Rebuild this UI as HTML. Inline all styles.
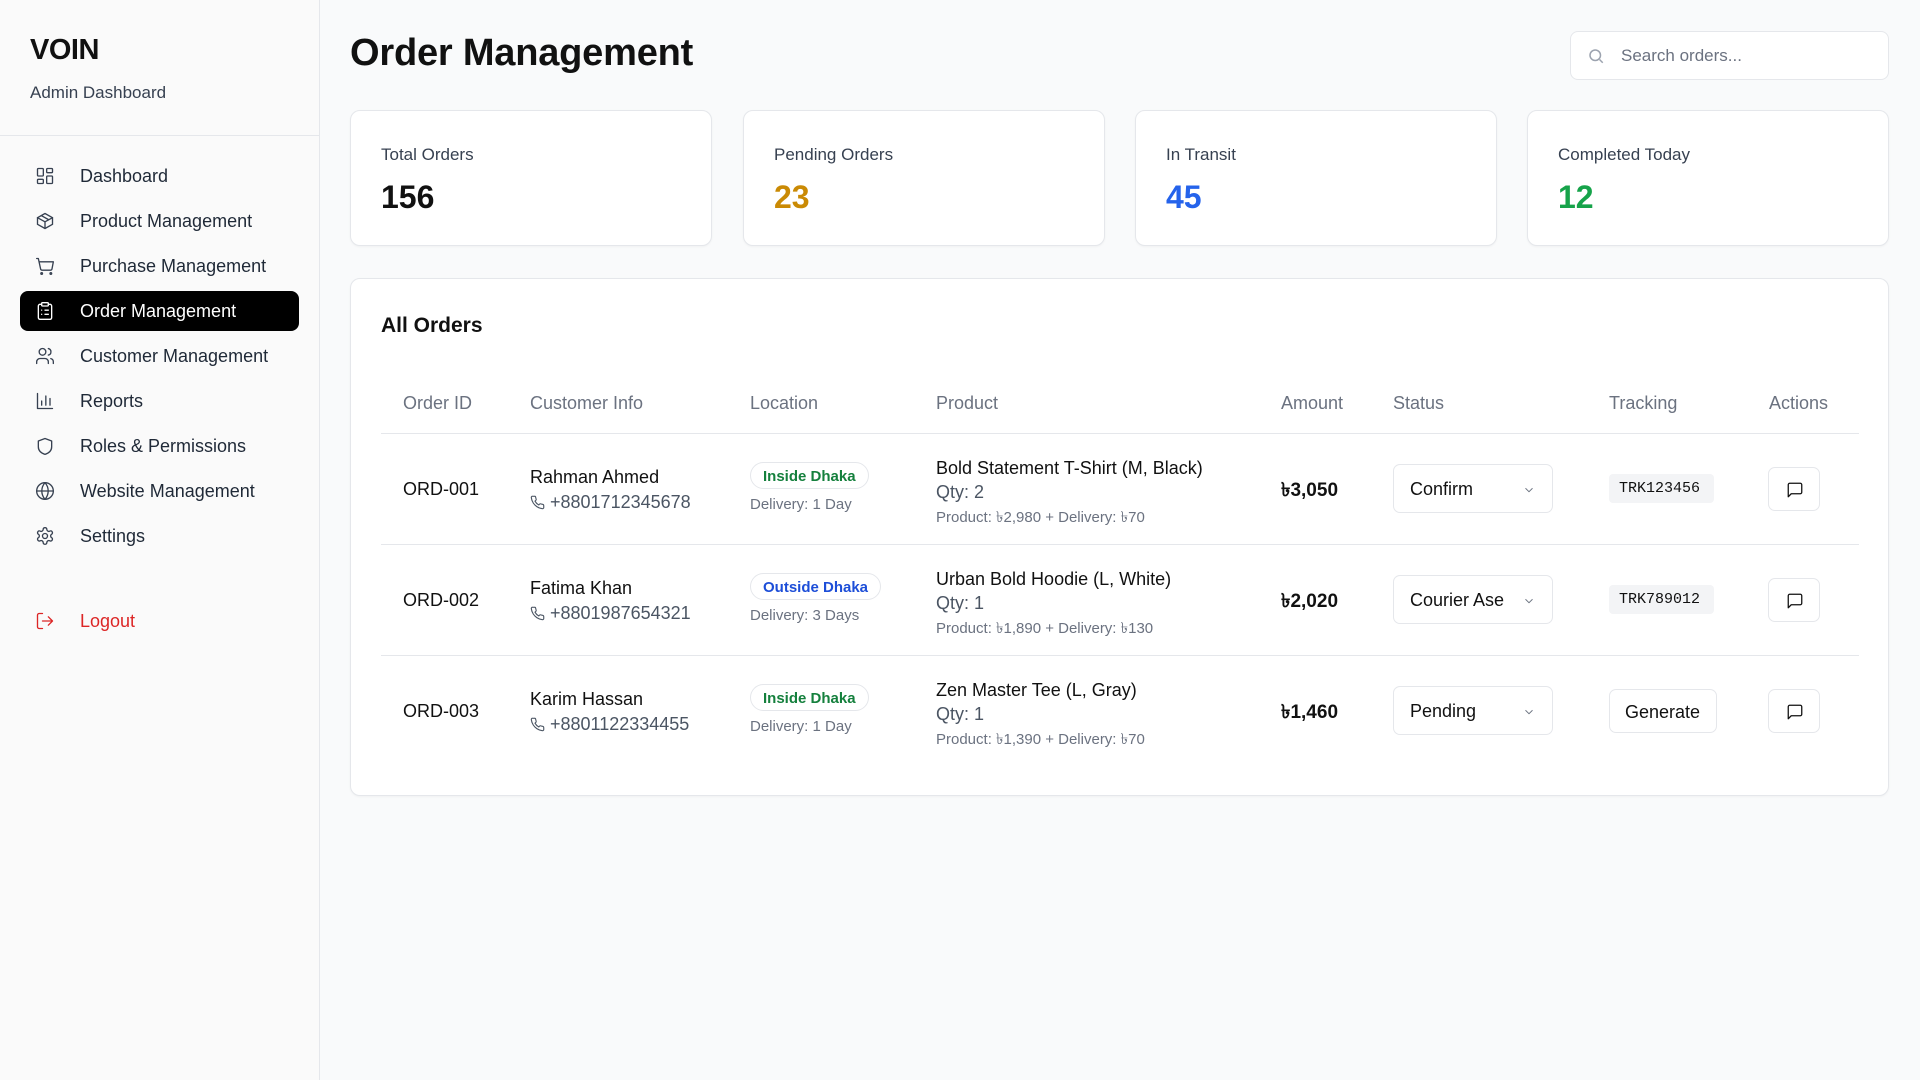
<!DOCTYPE html>
<html><head><meta charset="utf-8"><style>
*{box-sizing:border-box;margin:0;padding:0}
body{width:1920px;height:1080px;background:#f9fafb;font-family:"Liberation Sans",Arial,sans-serif;color:#111;position:relative;overflow:hidden}
.sb{position:absolute;left:0;top:0;width:320px;height:1080px;background:#fafafa;border-right:1px solid #e5e7eb}
.logo{position:absolute;left:30px;top:34px;font-size:29px;font-weight:bold;letter-spacing:-0.5px}
.sub{position:absolute;left:30px;top:83px;font-size:17px;color:#374151}
.div{position:absolute;left:0;top:135px;width:319px;border-top:1px solid #e5e7eb}
.nav{position:absolute;left:20px;width:279px;height:40px;border-radius:8px;display:flex;align-items:center;font-size:18px;color:#1f2937}
.nav svg{position:absolute;left:15px;width:20px;height:20px;fill:none;stroke:#374151;stroke-width:1.6;stroke-linecap:round;stroke-linejoin:round}
.nav span{position:absolute;left:60px}
.nav.act{background:#000;color:#fff}
.nav.act svg{stroke:#fff}
.nav.out{color:#dc2626}.nav.out svg{stroke:#dc2626}
h1{position:absolute;left:350px;top:32px;font-size:38px;font-weight:bold;letter-spacing:-0.2px}
.search{position:absolute;left:1570px;top:31px;width:319px;height:49px;background:#fff;border:1px solid #e5e7eb;border-radius:8px;font-size:17px;color:#6b7280;padding:14px 0 0 50px}
.search svg{position:absolute;left:16px;top:15px;width:18px;height:18px;fill:none;stroke:#9ca3af;stroke-width:2}
.card{position:absolute;background:#fff;border:1px solid #e5e7eb;border-radius:10px;box-shadow:0 1px 2px rgba(0,0,0,.04)}
.st{top:110px;height:136px;width:362px}
.st .l{position:absolute;left:30px;top:34px;font-size:17px;color:#374151}
.st .v{position:absolute;left:30px;top:68px;font-size:32px;font-weight:bold}
.main{left:350px;top:278px;width:1539px;height:518px}
.ttl{position:absolute;left:30px;top:35px;font-size:21px;font-weight:bold}
.th{position:absolute;top:114px;font-size:18px;color:#6b7280}
.hl{position:absolute;left:30px;width:1478px;border-top:1px solid #e5e7eb}
.t{position:absolute;font-size:18px;white-space:nowrap}
.g{color:#4b5563}
.ph{padding-left:20px}
.ph svg{position:absolute;left:0;top:3px;width:15px;height:15px;fill:none;stroke:#4b5563;stroke-width:1.8;stroke-linejoin:round}
.sm{font-size:15px;color:#6b7280}
.badge{position:absolute;height:27px;border:1px solid #e5e7eb;border-radius:14px;font-size:15px;font-weight:bold;padding:5px 12px 0}
.sel{position:absolute;left:1042px;width:160px;height:49px;border:1px solid #e5e7eb;border-radius:7px;font-size:18px;padding:14px 0 0 16px}
.sel svg{position:absolute;right:16px;top:18px;width:14px;height:14px;fill:none;stroke:#6b7280;stroke-width:1.6}
.chip{position:absolute;left:1258px;width:105px;height:29px;background:#f3f4f6;border-radius:4px;font-family:"Liberation Mono",monospace;font-size:15px;padding:6px 0 0 10px}
.btn{position:absolute;border:1px solid #e5e7eb;border-radius:7px;background:#fff}
.btn svg{position:absolute;left:17px;top:13px;width:18px;height:18px;fill:none;stroke:#111;stroke-width:1.7;stroke-linejoin:round}
.amt{font-weight:bold;font-size:19px}
</style></head><body>
<div class="sb">
<div class="logo">VOIN</div>
<div class="sub">Admin Dashboard</div>
<div class="div"></div>
<div class="nav" style="top:156px"><svg viewBox="0 0 24 24"><rect x="3" y="3" width="7" height="9" rx="1"/><rect x="14" y="3" width="7" height="5" rx="1"/><rect x="14" y="12" width="7" height="9" rx="1"/><rect x="3" y="16" width="7" height="5" rx="1"/></svg><span>Dashboard</span></div>
<div class="nav" style="top:201px"><svg viewBox="0 0 24 24"><path d="M21 8l-9-5-9 5v8l9 5 9-5z"/><path d="M3 8l9 5 9-5M12 13v8M7.5 5.5l9 5"/></svg><span>Product Management</span></div>
<div class="nav" style="top:246px"><svg viewBox="0 0 24 24"><circle cx="8" cy="21" r="1"/><circle cx="19" cy="21" r="1"/><path d="M2 3h2l2.7 12.4a2 2 0 0 0 2 1.6h9.7a2 2 0 0 0 2-1.6L22 7H5"/></svg><span>Purchase Management</span></div>
<div class="nav act" style="top:291px"><svg viewBox="0 0 24 24"><rect x="8" y="2" width="8" height="4" rx="1"/><path d="M16 4h2a2 2 0 0 1 2 2v14a2 2 0 0 1-2 2H6a2 2 0 0 1-2-2V6a2 2 0 0 1 2-2h2M12 11h4M12 16h4M8 11h.01M8 16h.01"/></svg><span>Order Management</span></div>
<div class="nav" style="top:336px"><svg viewBox="0 0 24 24"><path d="M16 21v-2a4 4 0 0 0-4-4H6a4 4 0 0 0-4 4v2"/><circle cx="9" cy="7" r="4"/><path d="M22 21v-2a4 4 0 0 0-3-3.9M16 3.1a4 4 0 0 1 0 7.8"/></svg><span>Customer Management</span></div>
<div class="nav" style="top:381px"><svg viewBox="0 0 24 24"><path d="M3 3v18h18M8 17v-5M13 17V6M18 17v-8"/></svg><span>Reports</span></div>
<div class="nav" style="top:426px"><svg viewBox="0 0 24 24"><path d="M20 13c0 5-3.5 7.5-8 9-4.5-1.5-8-4-8-9V6l8-3 8 3z"/></svg><span>Roles &amp; Permissions</span></div>
<div class="nav" style="top:471px"><svg viewBox="0 0 24 24"><circle cx="12" cy="12" r="10"/><path d="M2 12h20M12 2a15 15 0 0 1 0 20 15 15 0 0 1 0-20"/></svg><span>Website Management</span></div>
<div class="nav" style="top:516px"><svg viewBox="0 0 24 24"><circle cx="12" cy="12" r="3"/><path d="M12.2 2h-.4a2 2 0 0 0-2 2v.2a2 2 0 0 1-1 1.7l-.4.3a2 2 0 0 1-2 0l-.2-.1a2 2 0 0 0-2.7.7l-.2.4a2 2 0 0 0 .7 2.7l.2.1a2 2 0 0 1 1 1.7v.5a2 2 0 0 1-1 1.7l-.2.1a2 2 0 0 0-.7 2.7l.2.4a2 2 0 0 0 2.7.7l.2-.1a2 2 0 0 1 2 0l.4.3a2 2 0 0 1 1 1.7v.2a2 2 0 0 0 2 2h.4a2 2 0 0 0 2-2v-.2a2 2 0 0 1 1-1.7l.4-.3a2 2 0 0 1 2 0l.2.1a2 2 0 0 0 2.7-.7l.2-.4a2 2 0 0 0-.7-2.7l-.2-.1a2 2 0 0 1-1-1.7v-.5a2 2 0 0 1 1-1.7l.2-.1a2 2 0 0 0 .7-2.7l-.2-.4a2 2 0 0 0-2.7-.7l-.2.1a2 2 0 0 1-2 0l-.4-.3a2 2 0 0 1-1-1.7V4a2 2 0 0 0-2-2z"/></svg><span>Settings</span></div>
<div class="nav out" style="top:601px"><svg viewBox="0 0 24 24"><path d="M9 21H5a2 2 0 0 1-2-2V5a2 2 0 0 1 2-2h4M16 17l5-5-5-5M21 12H9"/></svg><span>Logout</span></div>
</div>

<h1>Order Management</h1>
<div class="search"><svg viewBox="0 0 24 24"><circle cx="11" cy="11" r="7"/><path d="M21 21l-4.3-4.3"/></svg>Search orders...</div>

<div class="card st" style="left:350px"><div class="l">Total Orders</div><div class="v">156</div></div>
<div class="card st" style="left:743px"><div class="l">Pending Orders</div><div class="v" style="color:#ca8a04">23</div></div>
<div class="card st" style="left:1135px"><div class="l">In Transit</div><div class="v" style="color:#2563eb">45</div></div>
<div class="card st" style="left:1527px"><div class="l">Completed Today</div><div class="v" style="color:#16a34a">12</div></div>

<div class="card main">
<div class="ttl">All Orders</div>
<div class="th" style="left:52px">Order ID</div>
<div class="th" style="left:179px">Customer Info</div>
<div class="th" style="left:399px">Location</div>
<div class="th" style="left:585px">Product</div>
<div class="th" style="left:930px">Amount</div>
<div class="th" style="left:1042px">Status</div>
<div class="th" style="left:1258px">Tracking</div>
<div class="th" style="left:1418px">Actions</div>
<div class="hl" style="top:154px"></div>
<div class="hl" style="top:265px"></div>
<div class="hl" style="top:376px"></div>

<!-- row 1 -->
<div class="t" style="left:52px;top:200px">ORD-001</div>
<div class="t" style="left:179px;top:188px">Rahman Ahmed</div>
<div class="t g ph" style="left:179px;top:213px"><svg viewBox="0 0 24 24"><path d="M22 16.9v3a2 2 0 0 1-2.2 2 19.8 19.8 0 0 1-8.6-3.1 19.5 19.5 0 0 1-6-6A19.8 19.8 0 0 1 2.1 4.2 2 2 0 0 1 4.1 2h3a2 2 0 0 1 2 1.7c.1 1 .4 1.9.7 2.8a2 2 0 0 1-.5 2.1L8 9.9a16 16 0 0 0 6 6l1.3-1.3a2 2 0 0 1 2.1-.4c.9.3 1.8.6 2.8.7a2 2 0 0 1 1.7 2z"/></svg>+8801712345678</div>
<div class="badge" style="left:399px;top:183px;color:#15803d">Inside Dhaka</div>
<div class="t sm" style="left:399px;top:217px">Delivery: 1 Day</div>
<div class="t" style="left:585px;top:179px">Bold Statement T-Shirt (M, Black)</div>
<div class="t g" style="left:585px;top:203px">Qty: 2</div>
<div class="t sm" style="left:585px;top:227px">Product: ৳2,980 + Delivery: ৳70</div>
<div class="t amt" style="left:930px;top:197px">৳3,050</div>
<div class="sel" style="top:185px">Confirm<svg viewBox="0 0 24 24"><path d="M6 9l6 6 6-6"/></svg></div>
<div class="chip" style="top:195px">TRK123456</div>
<div class="btn" style="left:1417px;top:188px;width:52px;height:44px"><svg viewBox="0 0 24 24"><path d="M21 15a2 2 0 0 1-2 2H7l-4 4V5a2 2 0 0 1 2-2h14a2 2 0 0 1 2 2z"/></svg></div>

<!-- row 2 -->
<div class="t" style="left:52px;top:311px">ORD-002</div>
<div class="t" style="left:179px;top:299px">Fatima Khan</div>
<div class="t g ph" style="left:179px;top:324px"><svg viewBox="0 0 24 24"><path d="M22 16.9v3a2 2 0 0 1-2.2 2 19.8 19.8 0 0 1-8.6-3.1 19.5 19.5 0 0 1-6-6A19.8 19.8 0 0 1 2.1 4.2 2 2 0 0 1 4.1 2h3a2 2 0 0 1 2 1.7c.1 1 .4 1.9.7 2.8a2 2 0 0 1-.5 2.1L8 9.9a16 16 0 0 0 6 6l1.3-1.3a2 2 0 0 1 2.1-.4c.9.3 1.8.6 2.8.7a2 2 0 0 1 1.7 2z"/></svg>+8801987654321</div>
<div class="badge" style="left:399px;top:294px;color:#1d4ed8">Outside Dhaka</div>
<div class="t sm" style="left:399px;top:328px">Delivery: 3 Days</div>
<div class="t" style="left:585px;top:290px">Urban Bold Hoodie (L, White)</div>
<div class="t g" style="left:585px;top:314px">Qty: 1</div>
<div class="t sm" style="left:585px;top:338px">Product: ৳1,890 + Delivery: ৳130</div>
<div class="t amt" style="left:930px;top:308px">৳2,020</div>
<div class="sel" style="top:296px">Courier Ase<svg viewBox="0 0 24 24"><path d="M6 9l6 6 6-6"/></svg></div>
<div class="chip" style="top:306px">TRK789012</div>
<div class="btn" style="left:1417px;top:299px;width:52px;height:44px"><svg viewBox="0 0 24 24"><path d="M21 15a2 2 0 0 1-2 2H7l-4 4V5a2 2 0 0 1 2-2h14a2 2 0 0 1 2 2z"/></svg></div>

<!-- row 3 -->
<div class="t" style="left:52px;top:422px">ORD-003</div>
<div class="t" style="left:179px;top:410px">Karim Hassan</div>
<div class="t g ph" style="left:179px;top:435px"><svg viewBox="0 0 24 24"><path d="M22 16.9v3a2 2 0 0 1-2.2 2 19.8 19.8 0 0 1-8.6-3.1 19.5 19.5 0 0 1-6-6A19.8 19.8 0 0 1 2.1 4.2 2 2 0 0 1 4.1 2h3a2 2 0 0 1 2 1.7c.1 1 .4 1.9.7 2.8a2 2 0 0 1-.5 2.1L8 9.9a16 16 0 0 0 6 6l1.3-1.3a2 2 0 0 1 2.1-.4c.9.3 1.8.6 2.8.7a2 2 0 0 1 1.7 2z"/></svg>+8801122334455</div>
<div class="badge" style="left:399px;top:405px;color:#15803d">Inside Dhaka</div>
<div class="t sm" style="left:399px;top:439px">Delivery: 1 Day</div>
<div class="t" style="left:585px;top:401px">Zen Master Tee (L, Gray)</div>
<div class="t g" style="left:585px;top:425px">Qty: 1</div>
<div class="t sm" style="left:585px;top:449px">Product: ৳1,390 + Delivery: ৳70</div>
<div class="t amt" style="left:930px;top:419px">৳1,460</div>
<div class="sel" style="top:407px">Pending<svg viewBox="0 0 24 24"><path d="M6 9l6 6 6-6"/></svg></div>
<div class="btn t" style="left:1258px;top:410px;width:108px;height:44px;padding:12px 0 0 15px">Generate</div>
<div class="btn" style="left:1417px;top:410px;width:52px;height:44px"><svg viewBox="0 0 24 24"><path d="M21 15a2 2 0 0 1-2 2H7l-4 4V5a2 2 0 0 1 2-2h14a2 2 0 0 1 2 2z"/></svg></div>
</div>
</body></html>
